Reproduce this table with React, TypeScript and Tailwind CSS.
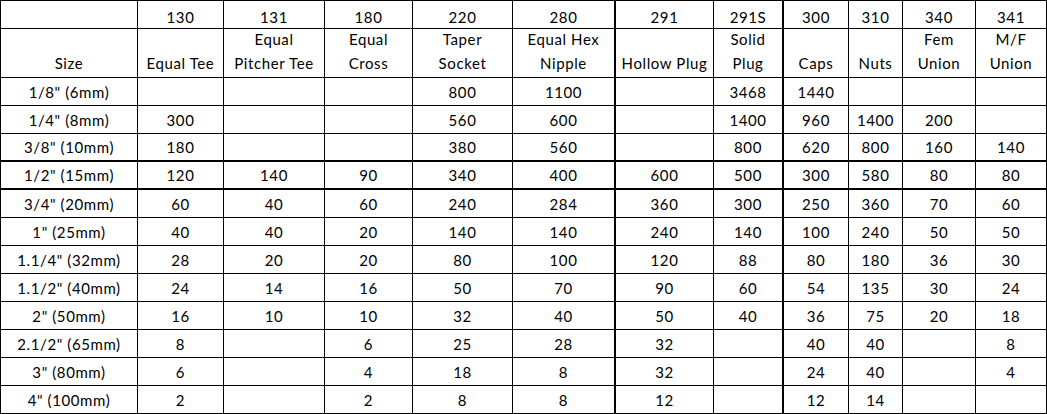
const codes = ["130", "131", "180", "220", "280", "291", "291S", "300", "310", "340", "341"];

const names: string[][] = [
  ["Equal Tee"],
  ["Equal", "Pitcher Tee"],
  ["Equal", "Cross"],
  ["Taper", "Socket"],
  ["Equal Hex", "Nipple"],
  ["Hollow Plug"],
  ["Solid", "Plug"],
  ["Caps"],
  ["Nuts"],
  ["Fem", "Union"],
  ["M/F", "Union"],
];

const rows: [string, string[]][] = [
  ['1/8" (6mm)', ["", "", "", "800", "1100", "", "3468", "1440", "", "", ""]],
  ['1/4" (8mm)', ["300", "", "", "560", "600", "", "1400", "960", "1400", "200", ""]],
  ['3/8" (10mm)', ["180", "", "", "380", "560", "", "800", "620", "800", "160", "140"]],
  ['1/2" (15mm)', ["120", "140", "90", "340", "400", "600", "500", "300", "580", "80", "80"]],
  ['3/4" (20mm)', ["60", "40", "60", "240", "284", "360", "300", "250", "360", "70", "60"]],
  ['1" (25mm)', ["40", "40", "20", "140", "140", "240", "140", "100", "240", "50", "50"]],
  ['1.1/4" (32mm)', ["28", "20", "20", "80", "100", "120", "88", "80", "180", "36", "30"]],
  ['1.1/2" (40mm)', ["24", "14", "16", "50", "70", "90", "60", "54", "135", "30", "24"]],
  ['2" (50mm)', ["16", "10", "10", "32", "40", "50", "40", "36", "75", "20", "18"]],
  ['2.1/2" (65mm)', ["8", "", "6", "25", "28", "32", "", "40", "40", "", "8"]],
  ['3" (80mm)', ["6", "", "4", "18", "8", "32", "", "24", "40", "", "4"]],
  ['4" (100mm)', ["2", "", "2", "8", "8", "12", "", "12", "14", "", ""]],
];

// columns whose right edge is drawn heavier in the source
const heavyCol = [false, false, false, false, false, true, false, true, false, false, false, false];
// rows (data index) whose bottom edge is heavier
const heavyRow = [false, false, true, true, false, false, false, false, false, false, false, false];

function Cell({
  col,
  heavyBottom,
  className,
  children,
}: {
  col: number;
  heavyBottom?: boolean;
  className: string;
  children?: React.ReactNode;
}) {
  const right = heavyCol[col] ? "border-r-2" : "border-r";
  const bottom = heavyBottom ? "border-b-2" : "border-b";
  return <div className={`${right} ${bottom} border-black ${className}`}>{children}</div>;
}

export default function App() {
  return (
    <div
      className="w-[1047px] h-[414px] bg-white text-black text-[15px] tracking-[0.6px]"
      style={{ fontFamily: "Lato, 'Open Sans', sans-serif" }}
    >
      <div className="grid grid-cols-[137px_86px_101px_88px_100px_103px_98px_70px_65px_54px_73px_71px] grid-rows-[28px_49px_repeat(12,28px)] border-l border-t border-black w-[1047px]">
        <Cell col={0} className="" />
        {codes.map((c, i) => (
          <Cell key={c} col={i + 1} className="flex items-center justify-center pt-[5px]">
            {c}
          </Cell>
        ))}

        <Cell col={0} className="flex flex-col items-center justify-end pb-[2px] leading-[24px]">
          Size
        </Cell>
        {names.map((n, i) => (
          <Cell
            key={i}
            col={i + 1}
            className="flex flex-col items-center justify-end pb-[2px] leading-[24px] whitespace-nowrap"
          >
            {n.map((line) => (
              <span key={line}>{line}</span>
            ))}
          </Cell>
        ))}

        {rows.map(([size, vals], r) => (
          <div key={size} className="contents">
            <Cell col={0} heavyBottom={heavyRow[r]} className="flex items-center justify-center pt-[1px]">
              {size}
            </Cell>
            {vals.map((v, i) => (
              <Cell
                key={i}
                col={i + 1}
                heavyBottom={heavyRow[r]}
                className="flex items-center justify-center pt-[1px]"
              >
                {v}
              </Cell>
            ))}
          </div>
        ))}
      </div>
    </div>
  );
}
